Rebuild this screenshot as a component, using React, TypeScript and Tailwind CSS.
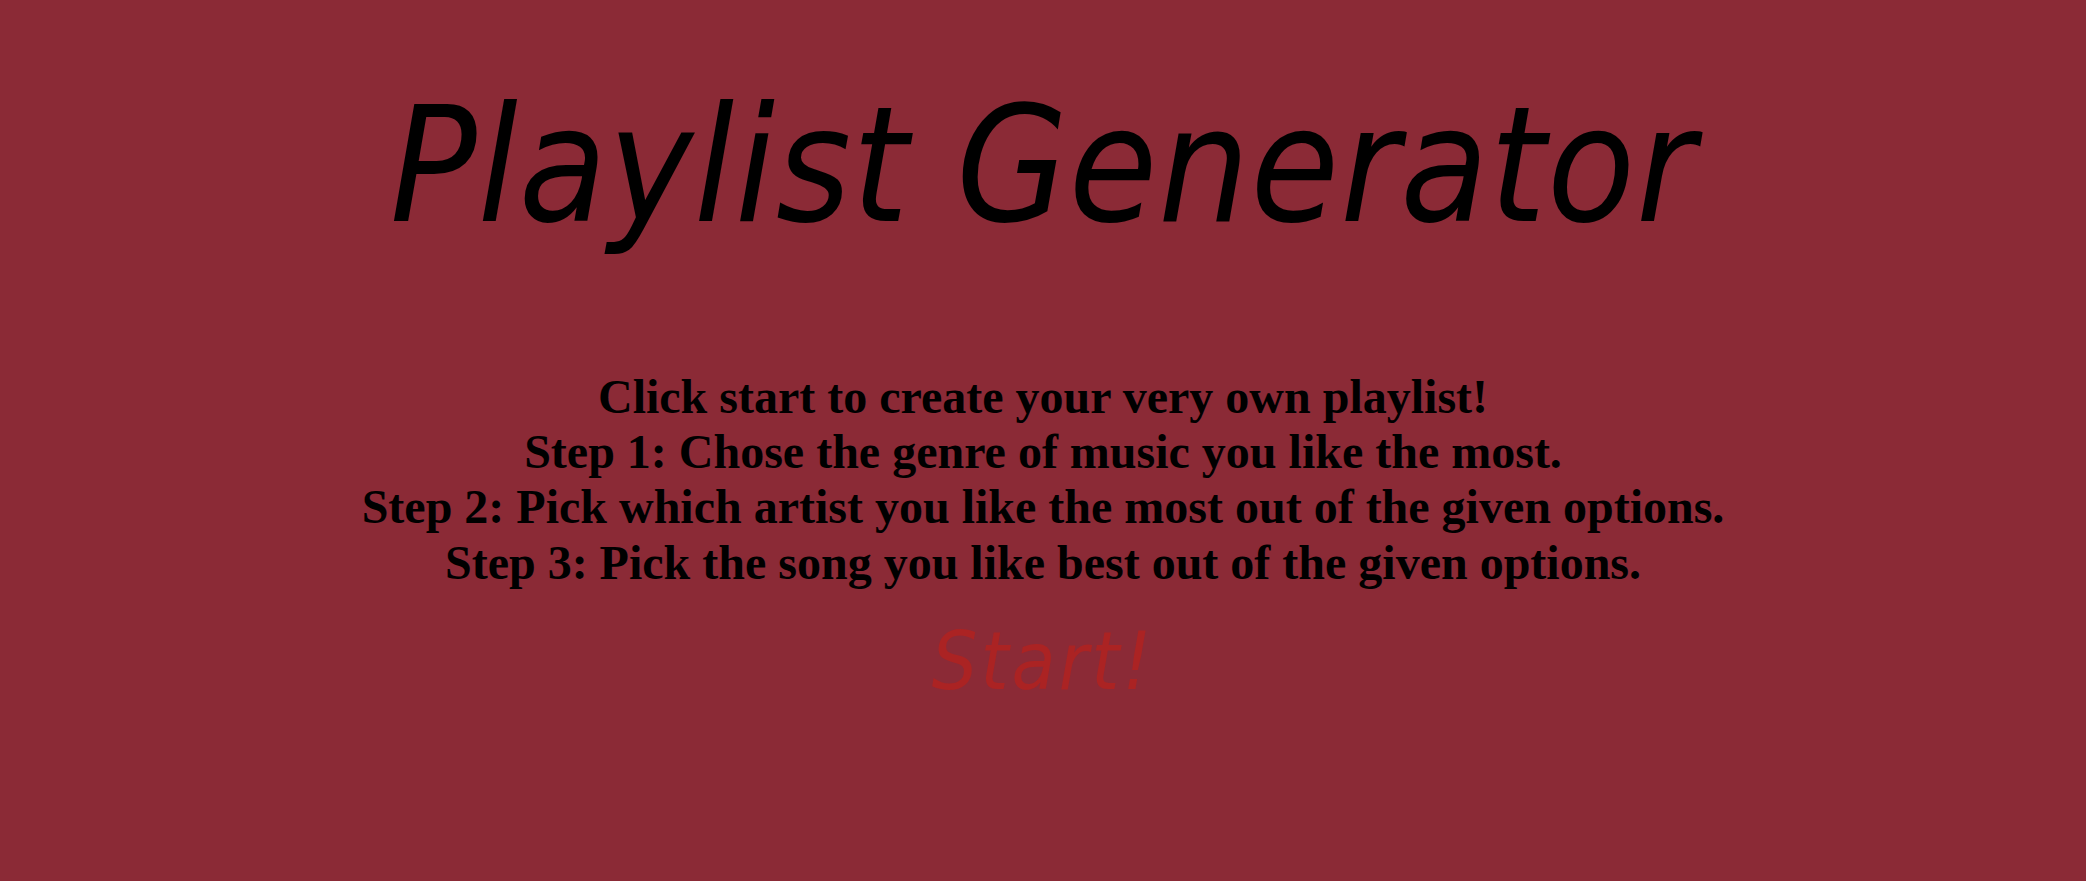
export default function App() {
  return (
    <div className="min-h-screen w-full bg-[#8b2a36] flex flex-col items-center text-black">
      <h1 className="mt-[74px] text-[160px] leading-[1.15] italic font-normal tracking-[1px] [font-family:'DejaVu_Sans_Condensed','DejaVu_Sans',sans-serif] [font-stretch:condensed]">
        Playlist Generator
      </h1>
      <div className="mt-[111px] text-center text-[48px] leading-[1.15] font-bold [font-family:'Liberation_Serif',serif]">
        <p>Click start to create your very own playlist!</p>
        <p>Step 1: Chose the genre of music you like the most.</p>
        <p>Step 2: Pick which artist you like the most out of the given options.</p>
        <p>Step 3: Pick the song you like best out of the given options.</p>
      </div>
      <button className="mt-[26px] text-[80px] leading-[1.15] italic tracking-[3px] text-[#ab2323] [font-family:'DejaVu_Sans_Condensed','DejaVu_Sans',sans-serif] [font-stretch:condensed]">
        Start!
      </button>
    </div>
  );
}
